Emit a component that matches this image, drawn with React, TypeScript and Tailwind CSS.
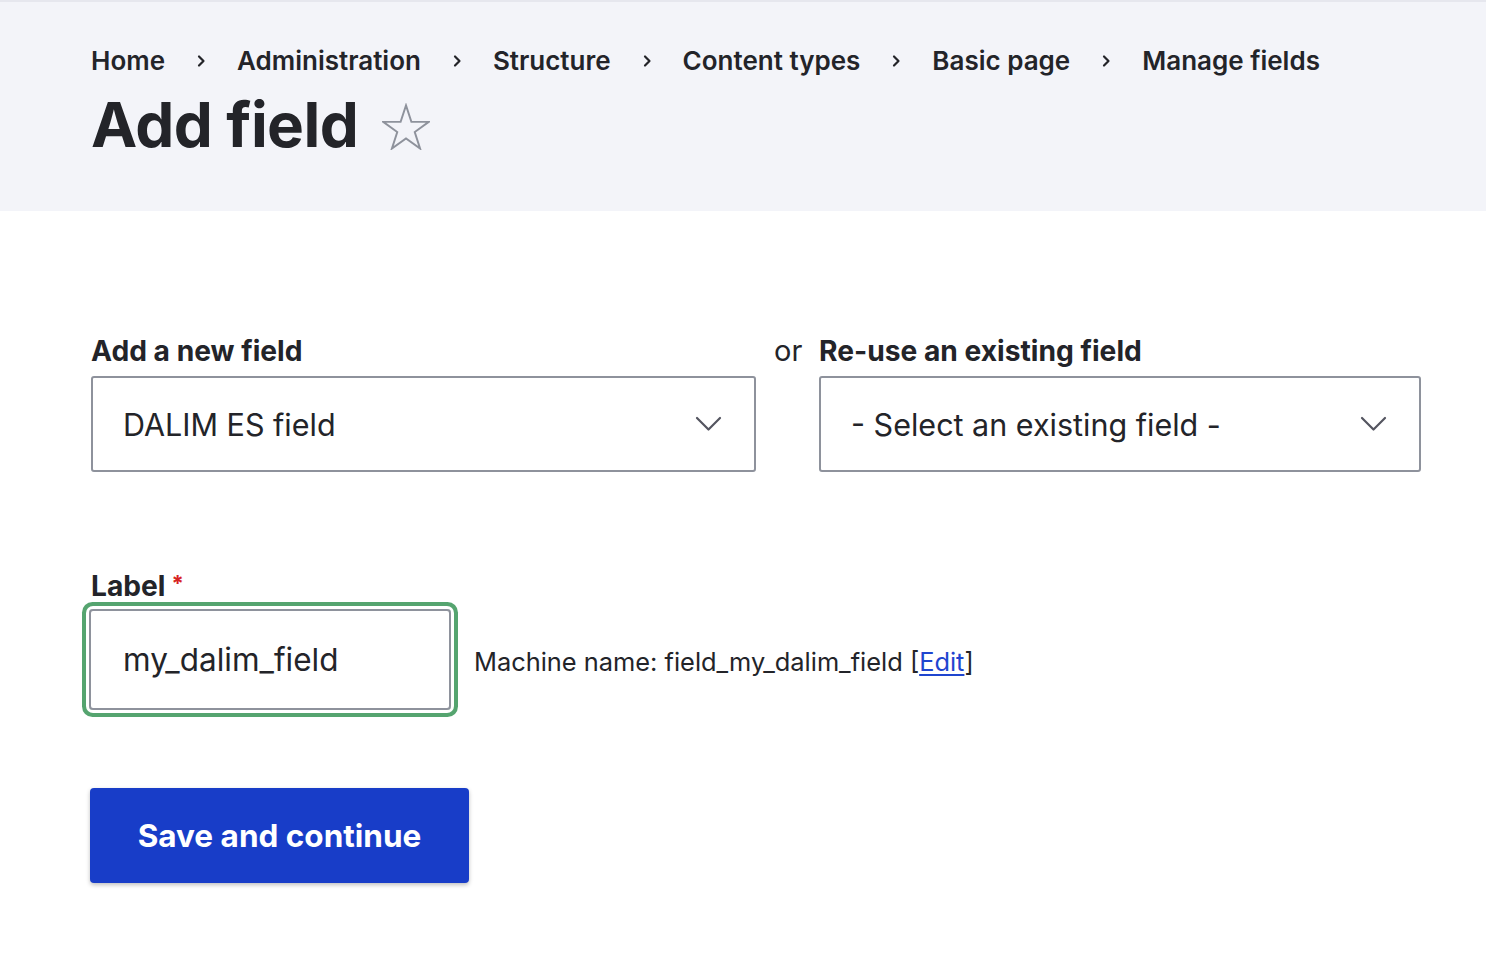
import React, { useState } from "react";

const crumbs = ["Home", "Administration", "Structure", "Content types", "Basic page", "Manage fields"];

function Chevron() {
  return (
    <svg className="w-[27px] h-[16px]" viewBox="0 0 27 16" fill="none" stroke="#545560" strokeWidth="2.2" strokeLinecap="round" strokeLinejoin="round">
      <path d="M2 2l11.5 11.5L25 2" />
    </svg>
  );
}

function Select({ value, width }: { value: string; width: string }) {
  return (
    <div className={`${width} h-[96px] border-2 border-[#8e929c] rounded-[3px] bg-white flex items-center justify-between pl-[30px] pr-[32px]`}>
      <span className="text-[30.5px] text-[#232429] leading-none pt-[2px]">{value}</span>
      <Chevron />
    </div>
  );
}

export default function App() {
  const [label, setLabel] = useState("my_dalim_field");

  return (
    <div className="min-h-screen bg-white text-[#232429] font-['Inter','Noto_Sans',sans-serif]">
      {/* Page header */}
      <header className="bg-[#f3f4f9] border-t-2 border-[#e6e7ee] pl-[91px] pt-[41px] pb-[46px]">
        <nav className="flex items-center h-[36px] text-[26px] font-semibold leading-[36px]">
          {crumbs.map((c, i) => (
            <React.Fragment key={c}>
              {i > 0 && (
                <svg className="w-[10px] h-[14px] mx-[31px]" viewBox="0 0 10 14" fill="none" stroke="#232429" strokeWidth="2.2" strokeLinecap="round" strokeLinejoin="round">
                  <path d="M3 2.5l4.5 4.5L3 11.5" />
                </svg>
              )}
              <span>{c}</span>
            </React.Fragment>
          ))}
        </nav>
        <div className="flex items-center h-[80px] mt-[6px]">
          <h1 className="text-[62px] font-bold leading-[80px] tracking-[-0.6px]">Add field</h1>
          <svg className="w-[48px] h-[47px] ml-[24px] mt-[2px]" viewBox="0 0 50 48" fill="none" stroke="#8e929c" strokeWidth="2" strokeLinejoin="miter">
            <path d="M25 2l5.6 17.2h18.1l-14.6 10.6 5.6 17.2L25 36.4 10.3 47l5.6-17.2L1.3 19.2h18.1z" />
          </svg>
        </div>
      </header>

      <main className="pl-[91px] pt-[122px]">
        {/* Field type row */}
        <div className="flex">
          <div className="flex flex-col gap-[7px]">
            <label className="text-[28.2px] font-bold leading-[36px]">Add a new field</label>
            <Select value="DALIM ES field" width="w-[665px]" />
          </div>
          <div className="w-[63px] pl-[18px] text-[29px] leading-[36px]">or</div>
          <div className="flex flex-col gap-[7px]">
            <label className="text-[28.2px] font-bold leading-[36px]">Re-use an existing field</label>
            <Select value="- Select an existing field -" width="w-[602px]" />
          </div>
        </div>

        {/* Label */}
        <div className="mt-[96px]">
          <label className="flex items-start text-[28.2px] font-bold leading-[36px]">
            Label
            <span className="text-[#d72222] text-[22px] leading-[22px] ml-[6px] mt-[4px]">*</span>
          </label>
          <div className="flex items-center mt-[5px]">
            <input
              value={label}
              onChange={(e) => setLabel(e.target.value)}
              className="w-[362px] h-[101px] -ml-[2px] border-2 border-[#8e929c] rounded-[4px] pl-[32px] text-[31.5px] text-[#232429] outline-none ring-4 ring-[#55a46f] ring-offset-[3px] ring-offset-white"
            />
            <p className="ml-[23px] text-[25.4px] leading-none pt-[4px]">
              Machine name: field_{label} [<a href="#" className="text-[#1f45cf] underline underline-offset-[3px] decoration-[1.5px]">Edit</a>]
            </p>
          </div>
        </div>

        {/* Actions */}
        <button className="mt-[78px] -ml-[1px] w-[379px] h-[95px] bg-[#183dc8] rounded-[4px] text-white text-[31.5px] font-bold shadow-[0_2px_4px_rgba(0,0,0,0.25)]">
          Save and continue
        </button>
      </main>
    </div>
  );
}
